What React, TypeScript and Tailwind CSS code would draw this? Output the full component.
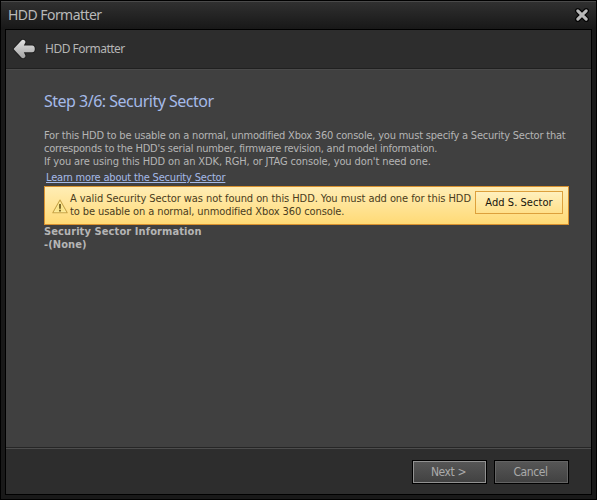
import React from "react";

function Line({ className = "", children }: { className?: string; children: React.ReactNode }) {
  return <div className={`h-[13px] w-max whitespace-pre leading-[13px] ${className}`}>{children}</div>;
}

function BackArrow() {
  return (
    <svg width="28" height="28" viewBox="0 0 28 28" className="shrink-0">
      <defs>
        <linearGradient id="arrow" x1="0" y1="0" x2="0" y2="1">
          <stop offset="0" stopColor="#e2e2e2" />
          <stop offset="1" stopColor="#a4a4a4" />
        </linearGradient>
      </defs>
      <path
        d="M4 13.4 L11.4 5.4 Q12.6 4.4 14 5.1 Q15.8 6 15.4 7.4 L13.8 10.6 H22.2 Q24.8 10.8 24.8 13.9 Q24.8 17 22.2 17.2 H13.8 L15.4 20.4 Q15.8 22 14 22.9 Q12.6 23.6 11.4 22.6 L4 14.6 Q3.4 14 4 13.4 Z"
        fill="url(#arrow)"
        stroke="#1f1f1f"
        strokeWidth="2"
        strokeLinejoin="round"
        paintOrder="stroke"
      />
    </svg>
  );
}

function CloseIcon() {
  return (
    <svg width="16" height="16" viewBox="0 0 16 16">
      <path d="M3.8 3.8 L12.2 12.2 M12.2 3.8 L3.8 12.2" stroke="#050505" strokeWidth="5.5" strokeLinecap="round" />
      <path d="M3.8 3.8 L12.2 12.2 M12.2 3.8 L3.8 12.2" stroke="#b8b8b8" strokeWidth="3.1" strokeLinecap="round" />
    </svg>
  );
}

function WarningIcon() {
  return (
    <svg width="16" height="15" viewBox="0 0 16 15" className="shrink-0">
      <path d="M8 1 L15.2 13.8 H0.8 Z" fill="#fff0a8" stroke="#c9a548" strokeWidth="1.1" strokeLinejoin="round" />
      <path d="M8 3.2 L13.2 12.6 H2.8 Z" fill="#fbe58a" />
      <path d="M7 5 H9 V9.7 H7 Z M7 10.8 H9 V12.5 H7 Z" fill="#806c2c" />
    </svg>
  );
}

function DarkButton({ children, focused = false }: { children: React.ReactNode; focused?: boolean }) {
  return (
    <button className="h-6 w-[75px] border border-black bg-black text-[12px] tracking-[-0.4px] text-[#aaaaaa]">
      <span
        className={`flex h-full w-full items-center justify-center border bg-linear-to-b from-[#565656] to-[#424242] ${
          focused ? "border-[#929292] pr-[2px]" : "border-[#646464] pr-[2px]"
        }`}
      >
        {children}
      </span>
    </button>
  );
}

export default function App() {
  return (
    <div className="flex h-[500px] w-[597px] flex-col overflow-hidden border border-black bg-[#191919] font-['DejaVu_Sans_Condensed','DejaVu_Sans',sans-serif] text-[11px] text-[#b5b5b5]">
      <header className="flex h-7 shrink-0 items-center justify-between border-t border-[#4a4a4a] bg-linear-to-b from-[#303030] to-[#181818] pr-[6px] pb-[2px] pl-[7px]">
        <h1 className="font-['Noto_Sans',sans-serif] text-[14px] leading-none tracking-[-0.55px] text-[#b9b9b9]">HDD Formatter</h1>
        <CloseIcon />
      </header>

      <main className="mx-1 mb-1 flex min-h-0 grow flex-col border border-black bg-[#404040]">
        <div className="flex h-[39px] shrink-0 items-center gap-[7px] border-b border-[#202020] bg-[#2d2d2d] pl-[4px]">
          <BackArrow />
          <span className="font-['Noto_Sans',sans-serif] text-[12px] tracking-[-0.5px]">HDD Formatter</span>
        </div>

        <section className="grow border-t border-b border-t-[#4a4a4a] border-b-[#262626] pl-[38px]">
          <h2 className="mt-[19px] h-6 font-['Noto_Sans',sans-serif] text-[16px] leading-6 tracking-[-0.5px] text-[#a5bae8]">
            Step 3/6: Security Sector
          </h2>
          <div className="mt-[16px]">
            <Line className="tracking-[-0.21px]">For this HDD to be usable on a normal, unmodified Xbox 360 console, you must specify a Security Sector that</Line>
            <Line className="tracking-[-0.24px]">corresponds to the HDD's serial number, firmware revision, and model information.</Line>
            <Line className="tracking-[-0.11px]">If you are using this HDD on an XDK, RGH, or JTAG console, you don't need one.</Line>
          </div>
          <a className="mt-[3px] ml-[2px] block h-[15px] w-max leading-[14px] tracking-[-0.19px] text-[#a5bae8] underline">
            Learn more about the Security Sector
          </a>
          <div className="flex h-[39px] w-[525px] border border-[#d8912f] bg-linear-to-b from-[#ffedb4] to-[#ffda75] text-[#4a3c20]">
            <div className="mt-[12px] ml-[7px]">
              <WarningIcon />
            </div>
            <div className="mt-[5px] ml-[2px]">
              <Line className="tracking-[-0.07px]">A valid Security Sector was not found on this HDD. You must add one for this HDD</Line>
              <Line className="tracking-[-0.1px]">to be usable on a normal, unmodified Xbox 360 console.</Line>
            </div>
            <button className="mt-[4px] mr-[5px] ml-auto h-[23px] w-[88px] shrink-0 border border-[#dda03c] bg-linear-to-b from-[#fff0bd] to-[#ffe08a] pt-[2px] tracking-[0.05px] text-[#17130a]">
              Add S. Sector
            </button>
          </div>
          <Line className="font-bold tracking-[0.1px]">Security Sector Information</Line>
          <Line className="font-bold tracking-[0.1px]">-(None)</Line>
        </section>

        <footer className="flex h-[46px] shrink-0 justify-end gap-[7px] border-t border-[#4d4d4d] bg-[#2d2d2d] pt-[11px] pr-[22px]">
          <DarkButton focused>Next &gt;</DarkButton>
          <DarkButton>Cancel</DarkButton>
        </footer>
      </main>
    </div>
  );
}
